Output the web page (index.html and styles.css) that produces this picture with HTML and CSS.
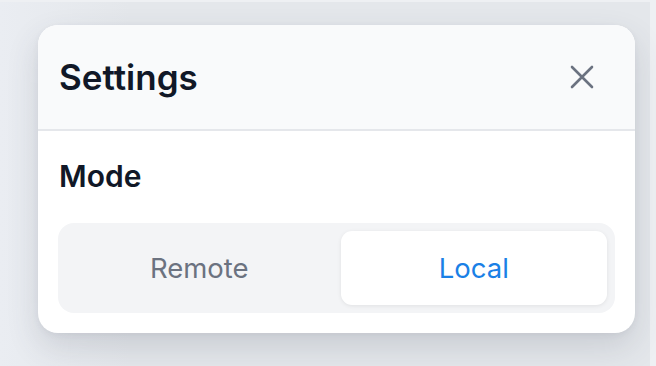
FILE: index.html
```html
<!DOCTYPE html>
<html>
<head>
<meta charset="utf-8">
<link rel="stylesheet" href="styles.css">
</head>
<body>
<div class="backdrop">
  <div class="card">
    <div class="header">
      <h1 class="title">Settings</h1>
      <button class="close" aria-label="Close">
        <svg width="24" height="24" viewBox="0 0 24 24" fill="none" stroke="#6b7280" stroke-width="2.6" stroke-linecap="round"><path d="M2 2 L22 22 M22 2 L2 22"/></svg>
      </button>
    </div>
    <div class="body">
      <div class="label">Mode</div>
      <div class="segmented">
        <div class="seg">Remote</div>
        <div class="seg active">Local</div>
      </div>
    </div>
  </div>
</div>
</body>
</html>
```
FILE: styles.css
```css
* { box-sizing: border-box; }
html, body { margin: 0; padding: 0; }
body {
  width: 656px;
  height: 366px;
  overflow: hidden;
  background: #eef0f3;
  font-family: Inter, Roboto, "Liberation Sans", sans-serif;
}
.backdrop {
  width: 650px;
  height: 364px;
  margin-top: 2px;
  background: linear-gradient(90deg, #eaedf2 0%, #e4e7eb 20%, #e4e7eb 100%);
  padding: 23px 0 0 38px;
}
.card {
  width: 597px;
  height: 308px;
  background: #ffffff;
  border-radius: 20px;
  overflow: hidden;
  box-shadow: 0 14px 32px rgba(60, 70, 90, 0.16), 0 2px 6px rgba(60, 70, 90, 0.06);
}
.header {
  height: 106px;
  background: #f9fafb;
  border-bottom: 2px solid #e5e7eb;
  display: flex;
  align-items: center;
  justify-content: space-between;
  padding: 0 41px 0 21px;
}
.title {
  margin: 0;
  font-size: 35px;
  line-height: 42px;
  font-weight: 600;
  color: #111827;
}
.close {
  background: none;
  border: 0;
  padding: 0;
  width: 24px;
  height: 24px;
  display: flex;
}
.body {
  padding: 27px 20px 20px 20px;
}
.label {
  font-size: 30px;
  font-weight: 600;
  color: #111827;
  padding-left: 1px;
  line-height: 36px;
}
.segmented {
  margin-top: 29px;
  height: 90px;
  background: #f3f4f6;
  border-radius: 16px;
  padding: 8px;
  display: grid;
  grid-template-columns: 1fr 1fr;
  gap: 8px;
}
.seg {
  display: flex;
  align-items: center;
  justify-content: center;
  font-size: 27.5px;
  color: #6b7280;
  border-radius: 11px;
}
.seg.active {
  background: #ffffff;
  color: #1a80e6;
  box-shadow: 0 1px 4px rgba(0, 0, 0, 0.08);
}
```
